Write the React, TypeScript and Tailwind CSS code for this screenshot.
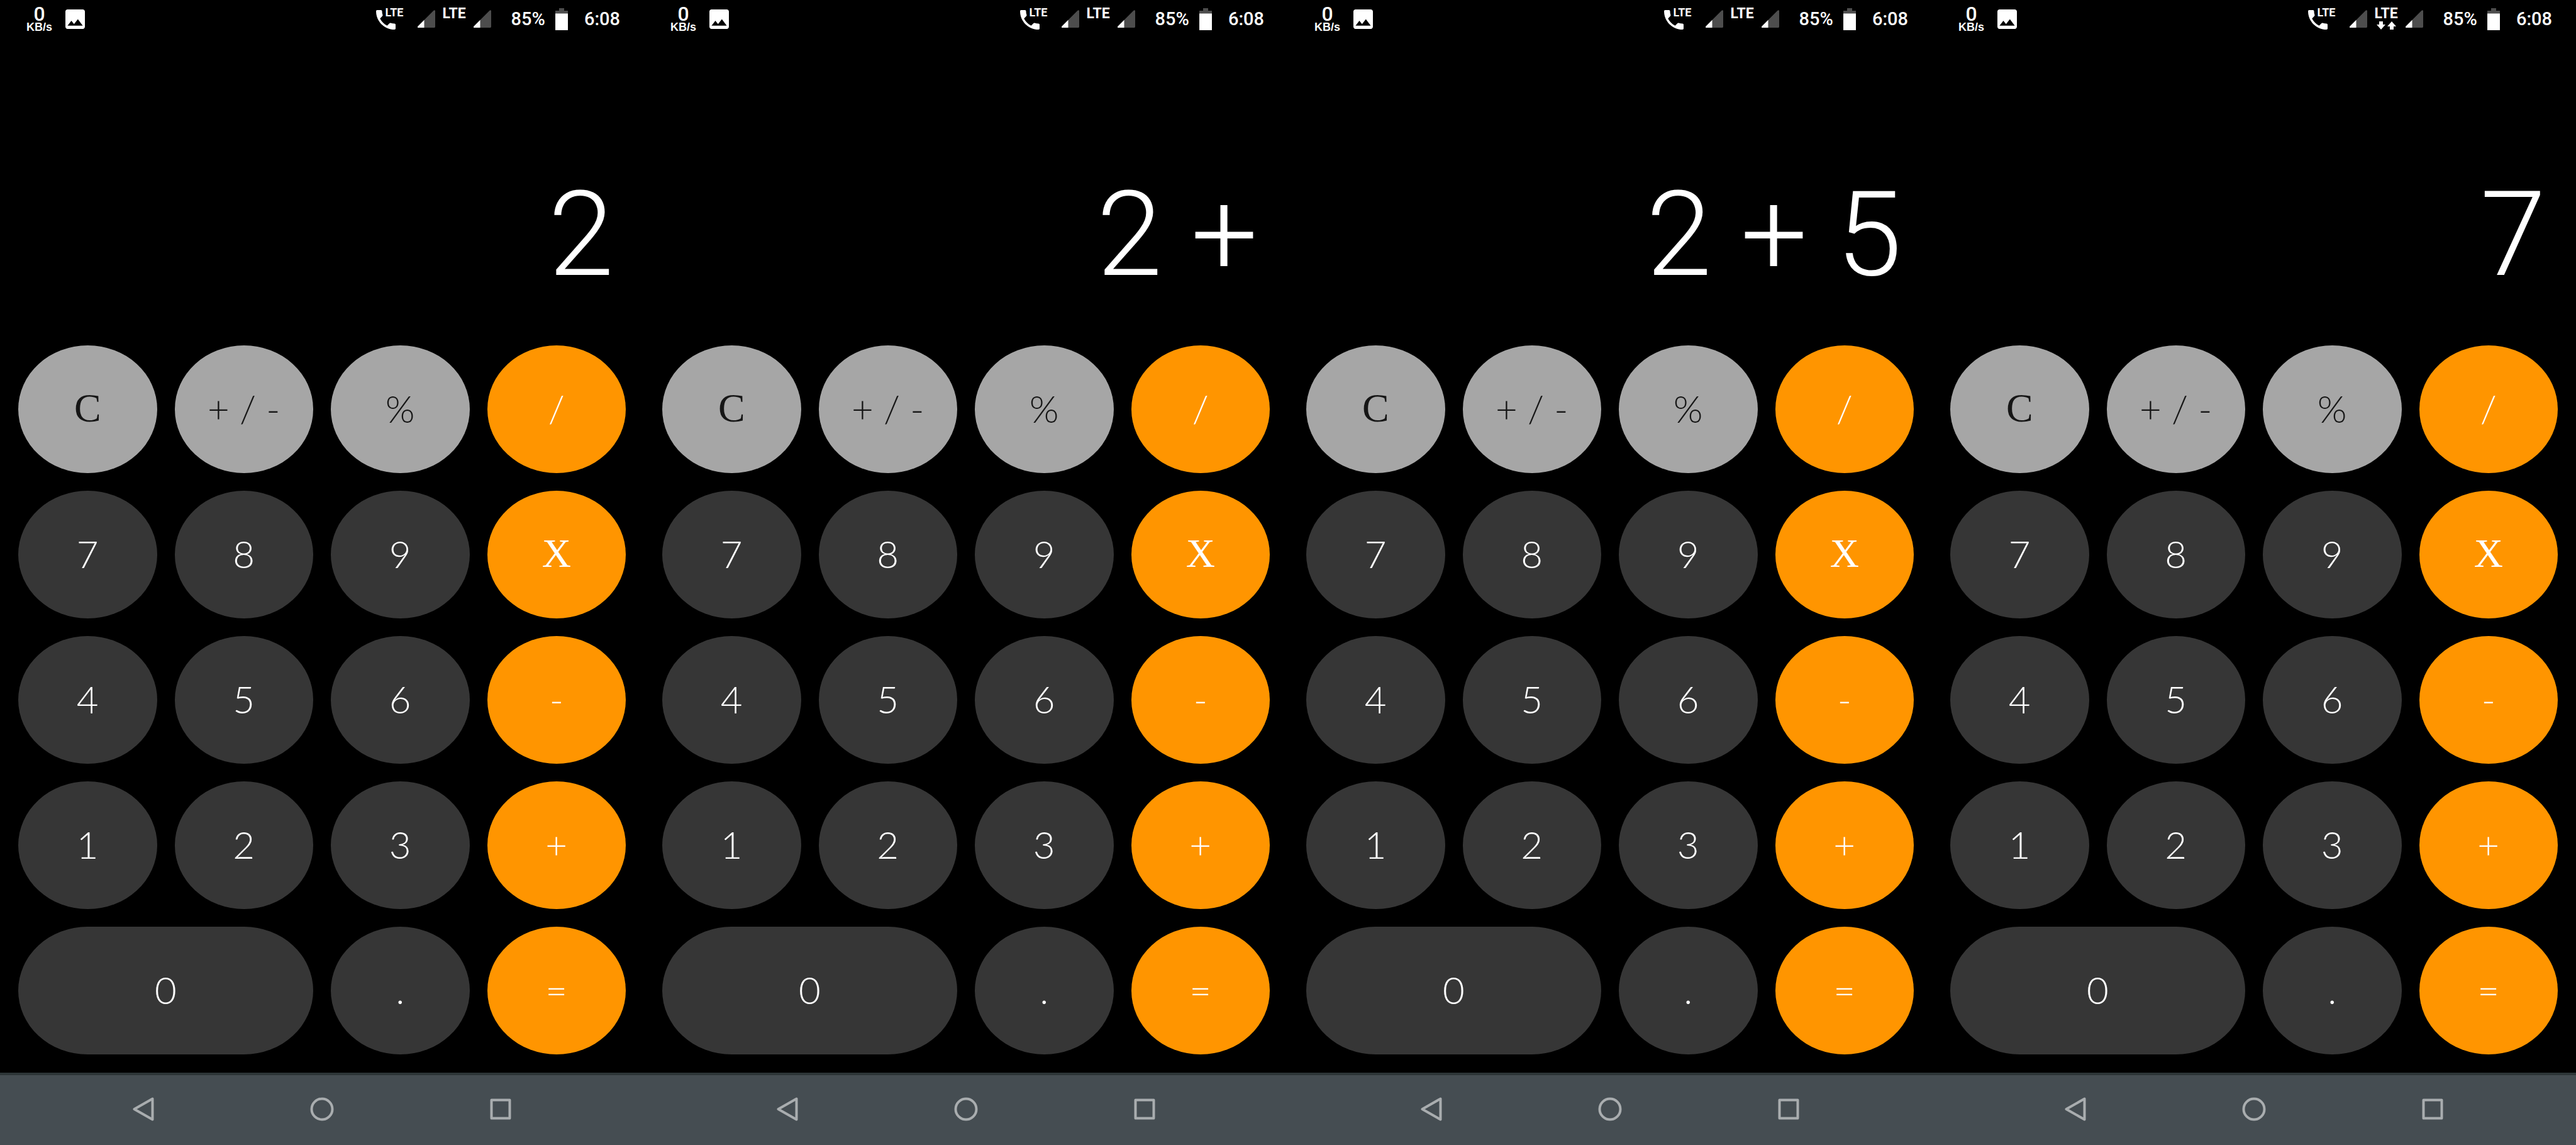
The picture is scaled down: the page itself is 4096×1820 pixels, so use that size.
type Key = { label: string; name?: string; kind: 'dark' | 'gray' | 'orange'; serif?: boolean; wide?: boolean };

const keyRows: Key[][] = [
  [
    { label: 'C', name: 'Clear', kind: 'gray', serif: true },
    { label: '+ / -', name: 'Toggle sign', kind: 'gray' },
    { label: '%', kind: 'gray' },
    { label: '/', kind: 'orange' },
  ],
  [
    { label: '7', kind: 'dark' },
    { label: '8', kind: 'dark' },
    { label: '9', kind: 'dark' },
    { label: 'X', name: 'Multiply', kind: 'orange', serif: true },
  ],
  [
    { label: '4', kind: 'dark' },
    { label: '5', kind: 'dark' },
    { label: '6', kind: 'dark' },
    { label: '-', kind: 'orange' },
  ],
  [
    { label: '1', kind: 'dark' },
    { label: '2', kind: 'dark' },
    { label: '3', kind: 'dark' },
    { label: '+', kind: 'orange' },
  ],
  [
    { label: '0', kind: 'dark', wide: true },
    { label: '.', kind: 'dark' },
    { label: '=', kind: 'orange' },
  ],
];

const kindClass = {
  dark: 'bg-[#363636] text-white',
  gray: 'bg-[#a6a6a6] text-[#161616]',
  orange: 'bg-[#ff9500] text-white',
};

function Signal() {
  return (
    <svg viewBox="0 0 28 28" className="size-7" aria-hidden="true">
      <path d="M28 1.5v25c0 .8-.7 1.5-1.5 1.5H1.2C0 28-.4 26.7.5 25.8L25.500.7C26.5-.3 28 .2 28 1.5z" fill="#4d4d4d" />
      <path d="M10.5 15.8V28H1.2C0 28-.4 26.7.5 25.8z" fill="#fff" />
    </svg>
  );
}

function StatusBar({ transferring }: { transferring: boolean }) {
  return (
    <header className="flex h-[60px] items-center justify-between pr-[38px] pl-[42px] text-white">
      <div className="flex items-center gap-[21px]">
        <div className="flex flex-col items-center gap-[2px]">
          <span className="font-[Roboto] text-[32px] leading-[24px] font-medium">0</span>
          <span className="font-['Liberation_Sans'] text-[18px] leading-[14px] font-bold">KB/s</span>
        </div>
        <svg viewBox="3 3 18 18" className="size-[31px]" fill="#fff" aria-hidden="true">
          <path d="M21 19V5c0-1.1-.9-2-2-2H5c-1.1 0-2 .9-2 2v14c0 1.1.9 2 2 2h14c1.1 0 2-.9 2-2zM8.5 13.5l2.5 3.01L14.5 12l4.5 6H5l3.5-4.5z" />
        </svg>
      </div>
      <div className="flex items-center font-[Roboto] font-medium">
        <div className="relative h-[34px] w-11">
          <svg viewBox="3 3 18 18" className="absolute bottom-0 left-0 size-[31px]" fill="#fff" aria-hidden="true">
            <path d="M20 15.5c-1.25 0-2.45-.2-3.57-.57-.35-.11-.74-.03-1.02.24l-2.2 2.2c-2.83-1.44-5.15-3.75-6.59-6.59l2.2-2.21c.28-.26.36-.65.25-1C8.7 6.45 8.5 5.25 8.5 4c0-.55-.45-1-1-1H4c-.55 0-1 .45-1 1 0 9.39 7.61 17 17 17 .55 0 1-.45 1-1v-3.5c0-.55-.45-1-1-1z" />
          </svg>
          <span className="absolute top-0 right-0 text-[18px] leading-[14px] font-bold">LTE</span>
        </div>
        <div className="ml-[22px]">
          <Signal />
        </div>
        <div className="mx-3 flex flex-col items-center gap-[3px]">
          <span className="text-[23px] leading-[18px] font-bold">LTE</span>
          <span className="flex h-[13px] gap-[3px]">
            {transferring && (
              <>
                <svg viewBox="0 0 14 13" className="h-[13px] w-[14px]" fill="#fff" aria-hidden="true">
                  <path d="M4 0h6v5h4l-7 8-7-8h4z" />
                </svg>
                <svg viewBox="0 0 14 13" className="h-[13px] w-[14px]" fill="#fff" aria-hidden="true">
                  <path d="M4 13h6V8h4L7 0 0 8h4z" />
                </svg>
              </>
            )}
          </span>
        </div>
        <Signal />
        <span className="ml-8 text-[29px] leading-none">85%</span>
        <svg viewBox="0 0 20 35" className="ml-4 h-[35px] w-5" aria-hidden="true">
          <path d="M6 0h8v4h6v5H0V4h6z" fill="#4d4d4d" />
          <path d="M0 8.5h20V35H0z" fill="#fff" />
        </svg>
        <time className="ml-[26px] text-[29px] leading-none">6:08</time>
      </div>
    </header>
  );
}

function Keypad() {
  return (
    <div className="flex flex-col gap-7 px-[29px] pb-[29px]">
      {keyRows.map((row, i) => (
        <div key={i} className="grid grid-cols-4 gap-7">
          {row.map((k) => (
            <button
              key={k.label}
              type="button"
              aria-label={k.name}
              className={`flex h-[203px] items-center justify-center pb-1 leading-none ${kindClass[k.kind]} ${
                k.serif ? "font-['Liberation_Serif',serif] text-[64px]" : 'font-[Lato,sans-serif] text-[60px] font-light'
              } ${k.wide ? 'col-span-2 rounded-[110px/50%]' : 'rounded-[50%]'}`}
            >
              {k.label}
            </button>
          ))}
        </div>
      ))}
    </div>
  );
}

function NavBar() {
  return (
    <nav className="grid h-[115px] grid-cols-3 items-center justify-items-center border-t-[4px] border-[#2d3537] bg-[#454d52] px-[86px] pb-1">
      <button type="button" aria-label="Back">
        <svg viewBox="0 0 34 38" className="h-[38px] w-[34px]" fill="none" stroke="#a9adaf" strokeWidth="4" strokeLinejoin="round" aria-hidden="true">
          <path d="M31.5 2.5v33L2.5 19z" />
        </svg>
      </button>
      <button type="button" aria-label="Home">
        <svg viewBox="0 0 38 38" className="size-[38px]" fill="none" stroke="#a9adaf" strokeWidth="4" aria-hidden="true">
          <circle cx="19" cy="19" r="16.5" />
        </svg>
      </button>
      <button type="button" aria-label="Recent apps">
        <svg viewBox="0 0 34 34" className="size-[34px]" fill="none" stroke="#a9adaf" strokeWidth="4" strokeLinejoin="round" aria-hidden="true">
          <path d="M2.5 2.5h29v29h-29z" />
        </svg>
      </button>
    </nav>
  );
}

function Phone({ display, transferring = false }: { display: string; transferring?: boolean }) {
  return (
    <section className="flex flex-col bg-black">
      <StatusBar transferring={transferring} />
      <div className="flex flex-1 items-end justify-end pr-[48px] pb-[82px]">
        <output className="font-[Roboto,sans-serif] text-[188px] leading-none font-light text-white">{display}</output>
      </div>
      <Keypad />
      <NavBar />
    </section>
  );
}

export default function App() {
  return (
    <main className="grid min-h-screen grid-cols-4 bg-black">
      <Phone display="2" />
      <Phone display="2 +" />
      <Phone display="2 + 5" />
      <Phone display="7" transferring />
    </main>
  );
}
